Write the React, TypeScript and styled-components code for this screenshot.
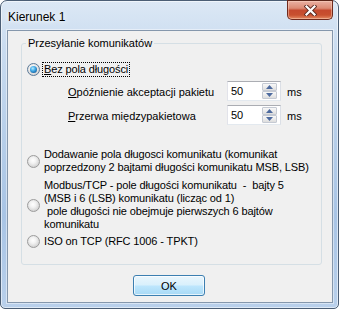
import styled, { createGlobalStyle } from "styled-components";

const GlobalStyle = createGlobalStyle`
  html, body {
    margin: 0;
    padding: 0;
    background: #ffffff;
  }
  body {
    font-family: "Liberation Sans", Arial, sans-serif;
    font-size: 11px;
    color: #000000;
  }
  * {
    box-sizing: border-box;
  }
`;

const Window = styled.div`
  width: 339px;
  height: 309px;
  display: flex;
  flex-direction: column;
  border: 1px solid #4b5e75;
  border-radius: 7px 7px 5px 5px;
  padding: 0 5px 5px 6px;
  background: linear-gradient(
    180deg,
    #dce8f5 0%,
    #cadcf0 15%,
    #b6cee9 45%,
    #a8c4e5 70%,
    #b9d0eb 100%
  );
  box-shadow: inset 0 0 0 1px rgba(255, 255, 255, 0.55);
`;

const TitleBar = styled.div`
  height: 29px;
  display: flex;
  align-items: flex-start;
  justify-content: space-between;
`;

const Title = styled.span`
  margin: 9px 0 0 1px;
  font-size: 12px;
  line-height: 14px;
  text-shadow: 0 0 5px #ffffff, 0 0 9px #ffffff;
`;

const CloseButton = styled.div`
  width: 46px;
  height: 20px;
  margin: -1px 0 0 0;
  display: flex;
  align-items: center;
  justify-content: center;
  border: 1px solid #6f2a1d;
  border-top-color: #5a2418;
  border-radius: 0 0 5px 5px;
  background: linear-gradient(
    180deg,
    #eab1a3 0%,
    #dc8a74 40%,
    #c5492e 52%,
    #c8502f 78%,
    #e48a63 100%
  );
  box-shadow: inset 0 0 0 1px rgba(255, 220, 200, 0.45);
`;

const Client = styled.div`
  flex: 1;
  display: flex;
  flex-direction: column;
  background: #f0f0f0;
  border: 1px solid #8597ac;
  box-shadow: 0 0 0 1px rgba(255, 255, 255, 0.45);
`;

const Group = styled.fieldset`
  margin: 6px 10px 0 13px;
  padding: 12px 0 15px 4px;
  min-width: 0;
  border: 1px solid #d5dfe5;
  border-radius: 3px;
  display: flex;
  flex-direction: column;
`;

const Legend = styled.legend`
  padding: 0 2px;
  line-height: 13px;
  font-size: 11px;
`;

const OptionRow = styled.div<{ $gap: number }>`
  display: flex;
  align-items: center;
  margin-top: ${(p) => p.$gap}px;
  padding-left: 1px;
`;

const Radio = styled.span<{ $checked?: boolean }>`
  position: relative;
  flex: none;
  width: 13px;
  height: 13px;
  border-radius: 50%;
  border: 1px solid ${(p) => (p.$checked ? "#5b7a99" : "#9c9c9c")};
  background: radial-gradient(
    circle at 45% 40%,
    #ffffff 0%,
    #f1f1f1 35%,
    #d0d0d0 78%,
    #ececec 100%
  );

  &::after {
    content: "";
    display: ${(p) => (p.$checked ? "block" : "none")};
    position: absolute;
    left: 2px;
    top: 2px;
    width: 7px;
    height: 7px;
    border-radius: 50%;
    background: radial-gradient(
      circle at 40% 35%,
      #b6ecff 0%,
      #41a9e6 40%,
      #16609f 80%,
      #0d3e6e 100%
    );
  }
`;

const OptionText = styled.span<{ $focused?: boolean }>`
  margin-left: 2px;
  padding: 1px 2px;
  line-height: 13px;
  letter-spacing: -0.12px;
  white-space: pre;
  outline: ${(p) => (p.$focused ? "1px dotted #000000" : "none")};
  outline-offset: -1px;
`;

const Line = styled.span`
  display: block;
`;

const SpinRow = styled.div<{ $gap: number }>`
  display: flex;
  align-items: center;
  margin-top: ${(p) => p.$gap}px;
`;

const SpinLabel = styled.span`
  width: 159px;
  margin-left: 42px;
  padding-top: 2px;
  line-height: 13px;
`;

const SpinBox = styled.div`
  width: 54px;
  height: 20px;
  display: flex;
  align-items: center;
  justify-content: space-between;
  padding: 1px 3px;
  background: #ffffff;
  border: 1px solid;
  border-color: #abadb3 #dbdfe6 #e3e9ef #e2e3ea;
`;

const SpinValue = styled.span`
  line-height: 13px;
`;

const SpinButtons = styled.div`
  width: 15px;
  height: 16px;
  display: flex;
  flex-direction: column;
`;

const SpinButton = styled.span`
  flex: 1;
  display: flex;
  align-items: center;
  justify-content: center;
  border: 1px solid #c5cad3;
  border-radius: 1px;
  background: linear-gradient(180deg, #f8f8f8 0%, #ececec 50%, #dddddd 100%);
`;

const Unit = styled.span`
  margin-left: 6px;
  padding-top: 2px;
  line-height: 13px;
`;

const OkButton = styled.button`
  align-self: center;
  margin: 10px 2px 0 0;
  width: 72px;
  height: 21px;
  padding: 0;
  font-family: "Liberation Sans", Arial, sans-serif;
  font-size: 11px;
  color: #000000;
  border: 1px solid #3c7fb1;
  border-radius: 3px;
  background: linear-gradient(
    180deg,
    #eaf6fd 0%,
    #d9f0fc 48%,
    #bee6fd 52%,
    #a7d9f5 100%
  );
  box-shadow: inset 0 0 0 1px rgba(255, 255, 255, 0.7);
`;

function CloseIcon() {
  return (
    <svg width="13" height="11" viewBox="0 0 13 11">
      <path d="M2.5 1.5 L10.5 9.5 M10.5 1.5 L2.5 9.5" stroke="#5a2a22" strokeWidth="4" strokeLinecap="square" />
      <path d="M2.5 1.5 L10.5 9.5 M10.5 1.5 L2.5 9.5" stroke="#ffffff" strokeWidth="2.2" strokeLinecap="square" />
    </svg>
  );
}

function Arrow({ up }: { up?: boolean }) {
  return (
    <svg width="7" height="4" viewBox="0 0 7 4">
      <polygon points={up ? "0,4 3.5,0 7,4" : "0,0 3.5,4 7,0"} fill="#4d6a9e" />
    </svg>
  );
}

function Spinner({ label, accel, value }: { label: string; accel: string; value: number }) {
  return (
    <>
      <SpinLabel>
        <u>{accel}</u>
        {label}
      </SpinLabel>
      <SpinBox>
        <SpinValue>{value}</SpinValue>
        <SpinButtons>
          <SpinButton>
            <Arrow up />
          </SpinButton>
          <SpinButton>
            <Arrow />
          </SpinButton>
        </SpinButtons>
      </SpinBox>
      <Unit>ms</Unit>
    </>
  );
}

const options = [
  {
    gap: 22,
    lines: [
      "Dodawanie pola długosci komunikatu (komunikat",
      "poprzedzony 2 bajtami długości komunikatu MSB, LSB)",
    ],
  },
  {
    gap: 3,
    lines: [
      "Modbus/TCP - pole długości komunikatu  -  bajty 5",
      "(MSB i 6 (LSB) komunikatu (licząc od 1)",
      " pole długości nie obejmuje pierwszych 6 bajtów",
      "komunikatu",
    ],
  },
  {
    gap: 2,
    lines: ["ISO on TCP (RFC 1006 - TPKT)"],
  },
];

export default function App() {
  return (
    <>
      <GlobalStyle />
      <Window>
        <TitleBar>
          <Title>Kierunek 1</Title>
          <CloseButton>
            <CloseIcon />
          </CloseButton>
        </TitleBar>
        <Client>
          <Group>
            <Legend>Przesyłanie komunikatów</Legend>
            <OptionRow $gap={0}>
              <Radio $checked />
              <OptionText $focused>
                <u>B</u>ez pola długości
              </OptionText>
            </OptionRow>
            <SpinRow $gap={4}>
              <Spinner accel="O" label="późnienie akceptacji pakietu" value={50} />
            </SpinRow>
            <SpinRow $gap={4}>
              <Spinner accel="P" label="rzerwa międzypakietowa" value={50} />
            </SpinRow>
            {options.map((opt, i) => (
              <OptionRow key={i} $gap={opt.gap}>
                <Radio />
                <OptionText>
                  {opt.lines.map((l, j) => (
                    <Line key={j}>{l}</Line>
                  ))}
                </OptionText>
              </OptionRow>
            ))}
          </Group>
          <OkButton>OK</OkButton>
        </Client>
      </Window>
    </>
  );
}
